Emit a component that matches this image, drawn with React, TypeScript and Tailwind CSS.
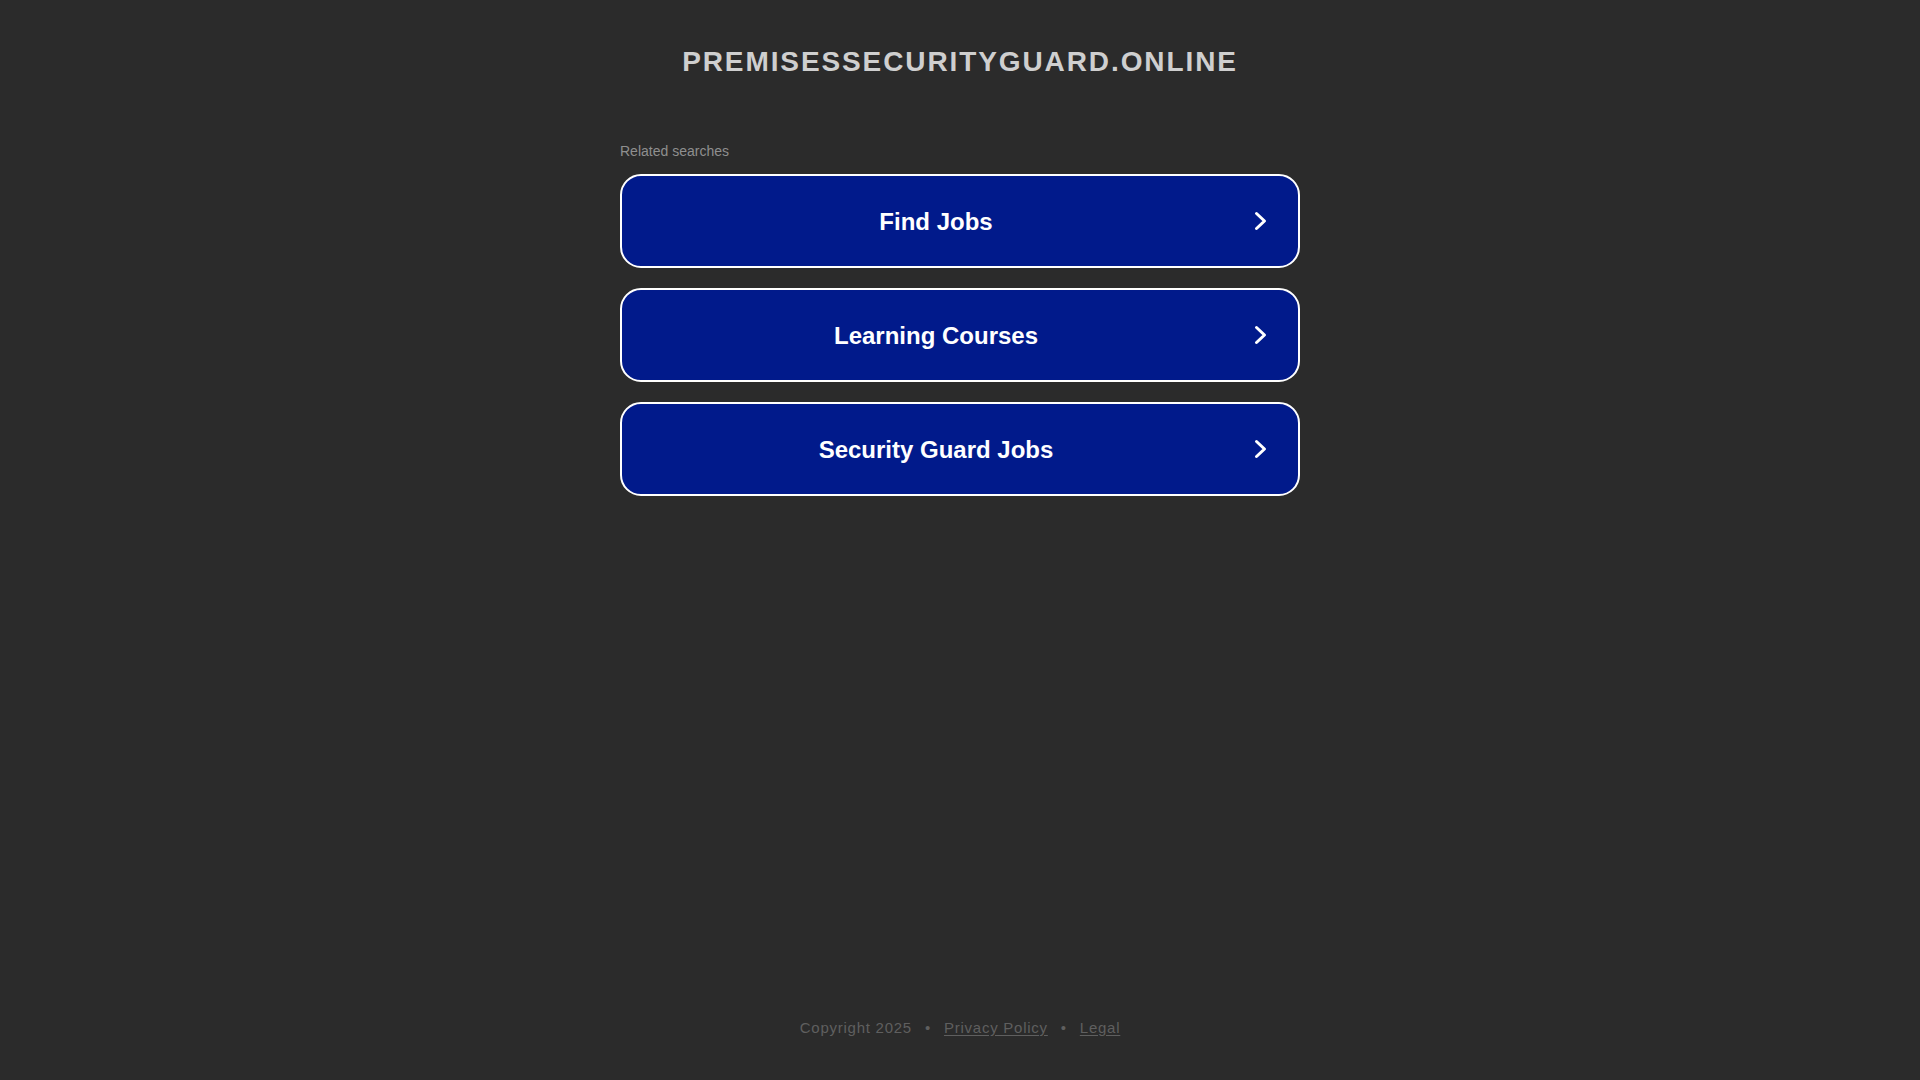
import React from "react";

const items = ["Find Jobs", "Learning Courses", "Security Guard Jobs"];

function Chevron() {
  return (
    <svg width="14" height="20" viewBox="0 0 14 20" fill="none" className="shrink-0">
      <polyline
        points="2.5,2.5 10.5,10 2.5,17.5"
        stroke="#ffffff"
        strokeWidth="3"
        strokeLinecap="round"
        strokeLinejoin="round"
      />
    </svg>
  );
}

export default function App() {
  return (
    <div
      className="h-screen w-full bg-[#2b2b2b] flex flex-col items-center overflow-hidden"
      style={{ fontFamily: '"Liberation Sans", Arial, sans-serif' }}
    >
      <h1 className="mt-[46px] text-[28px] leading-[32px] font-bold uppercase tracking-[1.9px] text-[#cfcfcf]">
        premisessecurityguard.online
      </h1>

      <div className="mt-[65px] w-[680px] flex flex-col">
        <div className="text-[14px] leading-[16px] text-[#8f8f8f]">Related searches</div>
        <div className="mt-[15px] flex flex-col gap-[20px]">
          {items.map((t) => (
            <a
              key={t}
              href="#"
              className="h-[94px] rounded-[21px] border-2 border-white bg-[#011a8b] flex items-center"
            >
              <span className="flex-1 pt-[2px] text-center text-[24px] leading-[28px] font-bold text-white">
                {t}
              </span>
              <span className="ml-[4px] mr-[30px] flex items-center">
                <Chevron />
              </span>
            </a>
          ))}
        </div>
      </div>

      <div className="mt-auto mb-[44px] flex items-center text-[15px] leading-[17px] tracking-[0.75px] text-[#5f5f5f]">
        <span>Copyright 2025</span>
        <span className="mx-[13px]">•</span>
        <a href="#" className="underline underline-offset-2">Privacy Policy</a>
        <span className="mx-[13px]">•</span>
        <a href="#" className="underline underline-offset-2">Legal</a>
      </div>
    </div>
  );
}
